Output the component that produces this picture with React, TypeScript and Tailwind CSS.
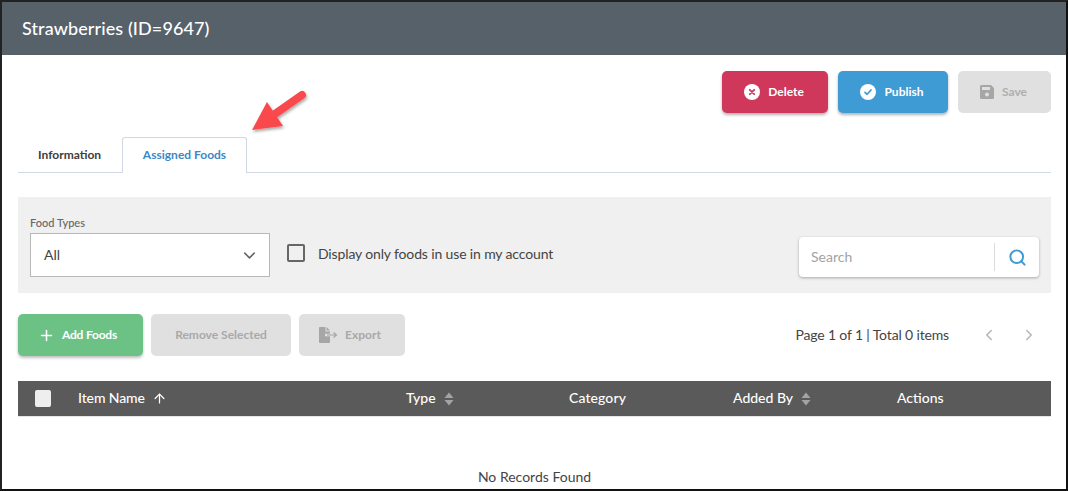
import { ArrowUp, ChevronDown, ChevronLeft, ChevronRight, Plus, Search } from 'lucide-react';

function SortIcon() {
  return (
    <svg width="10" height="14" viewBox="0 0 10 14" className="ml-[8px]">
      <path d="M5 0.5 L9.5 6 H0.5 Z" fill="#a3a3a3" />
      <path d="M5 13.5 L9.5 8 H0.5 Z" fill="#a3a3a3" />
    </svg>
  );
}

function RedArrow() {
  return (
    <svg width="62" height="50" viewBox="0 0 62 50" className="absolute left-[248px] top-[87px]">
      <defs>
        <filter id="arrowShadow" x="-20%" y="-20%" width="150%" height="150%">
          <feDropShadow dx="1" dy="2" stdDeviation="1.5" floodColor="#000" floodOpacity="0.35" />
        </filter>
      </defs>
      <g filter="url(#arrowShadow)">
        <path d="M52 6 L22 27" stroke="#f94a4e" strokeWidth="8" strokeLinecap="round" />
        <path d="M2 41 L17 13 L33 37 Z" fill="#f94a4e" />
      </g>
    </svg>
  );
}

export default function App() {
  return (
    <div className="relative w-[1068px] h-[491px] overflow-hidden bg-white border-t-2 border-b-2 border-l-2 border-r-2 border-t-[#222] border-b-[#111] border-l-[#222] border-r-[#111] font-['Lato','Open_Sans',sans-serif] text-[#333]">
      <header className="h-[53px] bg-[#56616a] flex items-center pl-[20px] text-[18px] tracking-[0.1px] font-medium text-white">
        Strawberries (ID=9647)
      </header>

      <div className="pl-[16px] pr-[15px]">
        <div className="mt-[16px] flex justify-end gap-[10px] h-[42px] text-[12px] font-bold">
          <button className="w-[106px] pr-[2px] flex items-center justify-center gap-[8px] rounded-[5px] bg-[#cf375b] text-white shadow-[0_2px_3px_rgba(0,0,0,0.3)]">
            <svg width="16" height="16" viewBox="0 0 16 16">
              <circle cx="8" cy="8" r="8" fill="#fff" />
              <path d="M5.8 5.8 L10.2 10.2 M10.2 5.8 L5.8 10.2" stroke="#cf375b" strokeWidth="1.8" strokeLinecap="round" />
            </svg>
            Delete
          </button>
          <button className="w-[110px] pr-[2px] flex items-center justify-center gap-[8px] rounded-[5px] bg-[#3f9bd3] text-white shadow-[0_2px_3px_rgba(0,0,0,0.3)]">
            <svg width="16" height="16" viewBox="0 0 16 16">
              <circle cx="8" cy="8" r="8" fill="#fff" />
              <path d="M5 8.3 L7.2 10.3 L11 6" fill="none" stroke="#3f9bd3" strokeWidth="1.7" strokeLinecap="round" strokeLinejoin="round" />
            </svg>
            Publish
          </button>
          <button className="w-[93px] pr-[2px] flex items-center justify-center gap-[8px] rounded-[5px] bg-[#e0e0e0] text-[#aeaeae]">
            <svg width="14" height="14" viewBox="0 0 14 14">
              <path d="M1.5 0 H11 L14 3 V12.5 A1.5 1.5 0 0 1 12.5 14 H1.5 A1.5 1.5 0 0 1 0 12.5 V1.5 A1.5 1.5 0 0 1 1.5 0 Z" fill="#a6a6a6" />
              <rect x="2" y="2" width="8" height="3" fill="#e0e0e0" />
              <circle cx="7" cy="9.5" r="2" fill="#e0e0e0" />
            </svg>
            Save
          </button>
        </div>

        <div className="mt-[24px] h-[36px] flex border-b border-[#cfd8e3] text-[12px] font-bold">
          <div className="w-[104px] pl-[20px] pt-[9px] text-[#3d3d3d]">Information</div>
          <div className="w-[125px] h-[36px] bg-white border border-b-0 border-[#cfd8e3] rounded-t-[3px] flex items-center justify-center pb-[2px] text-[#3c87c6]">
            Assigned Foods
          </div>
        </div>

        <section className="mt-[24px] h-[96px] bg-[#f0f0f0] flex items-start pl-[12px] pr-[12px]">
          <div className="pt-[19px]">
            <div className="text-[11px] leading-[14px] text-[#666] font-medium">Food Types</div>
            <div className="mt-[3px] w-[240px] h-[44px] bg-white border border-[#b9b9b9] flex items-center justify-between pl-[13px] pr-[10px] text-[14px] text-[#444]">
              <span className="pb-[2px]">All</span>
              <ChevronDown size={19} strokeWidth={2} className="text-[#666]" />
            </div>
          </div>
          <div className="ml-[17px] mt-[47px] h-[18px] flex items-center gap-[13px] text-[14px] tracking-[-0.14px] text-[#444]">
            <span className="w-[18px] h-[18px] rounded-[2px] border-2 border-[#666]" />
            Display only foods in use in my account
          </div>
          <div className="ml-auto mt-[40px] w-[240px] h-[40px] bg-white rounded-[4px] shadow-[0_1px_3px_rgba(0,0,0,0.3)] flex items-center pl-[12px]">
            <span className="text-[14px] text-[#a3a3a3] flex-1 pb-[2px]">Search</span>
            <span className="w-px h-[28px] bg-[#dcdcdc]" />
            <span className="w-[44px] flex justify-center">
              <Search size={19} strokeWidth={2.5} className="text-[#3f9bd3]" />
            </span>
          </div>
        </section>

        <div className="mt-[21px] h-[42px] flex items-stretch text-[12px] font-bold">
          <button className="w-[125px] pr-[6px] flex items-center justify-center gap-[7px] rounded-[5px] bg-[#6cc285] text-white tracking-[-0.2px] shadow-[0_2px_3px_rgba(0,0,0,0.25)]">
            <Plus size={17} strokeWidth={2.2} />
            Add Foods
          </button>
          <button className="ml-[8px] w-[140px] rounded-[5px] bg-[#e0e0e0] text-[#a9a9a9]">Remove Selected</button>
          <button className="ml-[8px] w-[106px] pr-[4px] flex items-center justify-center gap-[7px] rounded-[5px] bg-[#e0e0e0] text-[#a9a9a9]">
            <svg width="19" height="16" viewBox="0 0 19 16">
              <path d="M0 1 A1 1 0 0 1 1 0 H6.5 V4.5 H11 V6.8 H6 V9.2 H11 V15 A1 1 0 0 1 10 16 H1 A1 1 0 0 1 0 15 Z" fill="#a6a6a6" />
              <path d="M7.5 0 L11 3.5 H7.5 Z" fill="#a6a6a6" />
              <path d="M8 8 H17 M14.5 5.5 L17.5 8 L14.5 10.5" fill="none" stroke="#a6a6a6" strokeWidth="1.2" />
            </svg>
            Export
          </button>
          <div className="ml-auto flex items-center text-[14px] font-normal text-[#444]">
            <span className="pb-[2px] tracking-[-0.15px]">Page 1 of 1 | Total 0 items</span>
            <ChevronLeft size={18} strokeWidth={2} className="ml-[31px] text-[#b5b5b5]" />
            <ChevronRight size={18} strokeWidth={2} className="ml-[22px] mr-[13px] text-[#b5b5b5]" />
          </div>
        </div>

        <div className="mt-[25px] h-[36px] bg-[#5a5a5a] border-b border-[#e6e6e6] flex items-center text-[14px] font-medium text-white">
          <span className="ml-[17px] w-[16px] h-[17px] rounded-[2px] bg-[#eeeeee]" />
          <div className="ml-[27px] w-[328px] flex items-center">
            <span className="pb-[2px] tracking-[-0.1px]">Item Name</span>
            <ArrowUp size={15} strokeWidth={2} className="ml-[7px]" />
          </div>
          <div className="w-[163px] flex items-center">
            <span className="pb-[2px]">Type</span>
            <SortIcon />
          </div>
          <div className="w-[164px] pb-[2px] tracking-[0.1px]">Category</div>
          <div className="w-[164px] flex items-center">
            <span className="pb-[2px]">Added By</span>
            <SortIcon />
          </div>
          <div className="pb-[2px]">Actions</div>
        </div>

        <div className="mt-[51px] text-center text-[14px] leading-[17px] text-[#444]">No Records Found</div>
      </div>

      <RedArrow />
    </div>
  );
}
